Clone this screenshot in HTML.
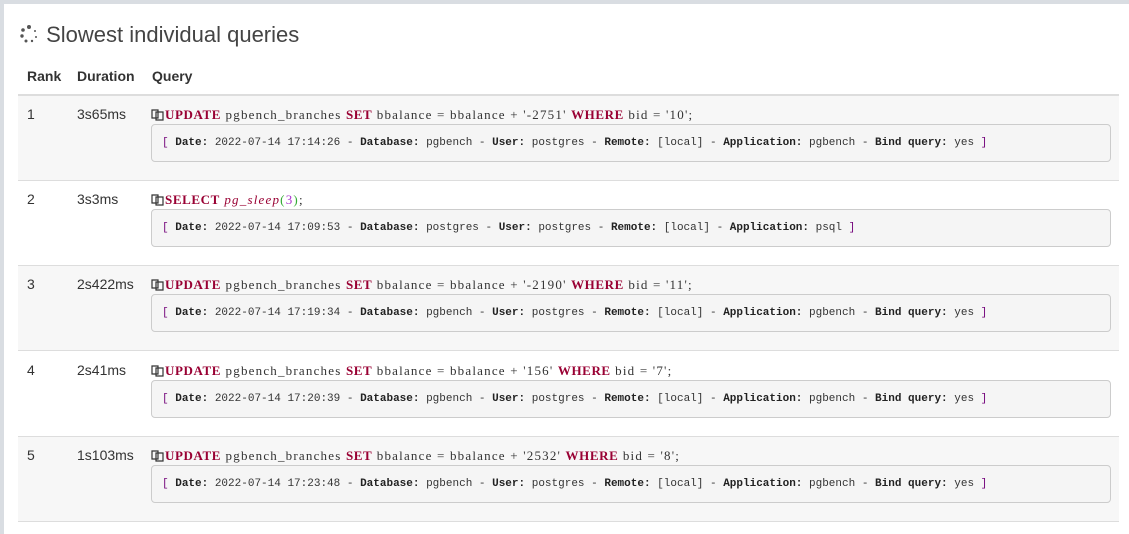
<!DOCTYPE html>
<html><head><meta charset="utf-8"><style>
body{margin:0;width:1129px;height:528px;background:#d9dde2;overflow:hidden;font-family:"Liberation Sans",sans-serif;}
.panel{position:absolute;left:4px;top:4px;width:1125px;height:530px;background:#fff;}
h2{position:absolute;left:18px;top:22px;margin:0;font-weight:normal;font-size:22px;color:#444;}
.hd{position:absolute;top:68px;font-weight:bold;font-size:14px;color:#333;}
.line{position:absolute;left:18px;width:1101px;height:2px;background:#ddd;top:94px;}
.row{position:absolute;left:18px;width:1101px;height:84px;border-bottom:1px solid #ddd;font-size:14px;color:#333;}
.g{background:#f7f7f7;}
.rk{position:absolute;left:9px;top:10px;}
.du{position:absolute;left:59px;top:10px;}
.q{position:absolute;left:133px;top:11px;font-family:"Liberation Serif",serif;font-size:13px;letter-spacing:1.2px;color:#333;white-space:nowrap;}
.k{color:#990033;font-weight:bold;letter-spacing:0.6px}
.f{color:#990033;font-style:italic;}
.n{color:#a3c;}
.box{position:absolute;left:133px;top:28px;width:960px;height:38px;background:#f5f5f5;border:1px solid #ccc;border-radius:4px;font-family:"Liberation Mono",monospace;font-size:11px;line-height:37px;color:#333;white-space:nowrap;box-sizing:border-box;padding-left:10px;}
.box b{color:#222}
.br{color:#74057b}
.ic{display:inline-block;width:13px;height:13px;vertical-align:-2px;margin-right:1px}
</style></head><body>
<div class="panel"></div>
<h2><svg width="22" height="20" viewBox="0 0 22 20" style="vertical-align:-2px"><g fill="#555"><circle cx="11" cy="3" r="2"/><circle cx="5" cy="6" r="1.8"/><circle cx="4" cy="12" r="1.7"/><circle cx="8" cy="17" r="1.5"/><circle cx="14" cy="17" r="1.2"/><circle cx="18" cy="13" r="1"/><circle cx="17" cy="7" r="1"/></g></svg> Slowest individual queries</h2>
<div class="hd" style="left:27px">Rank</div>
<div class="hd" style="left:77px">Duration</div>
<div class="hd" style="left:152px">Query</div>
<div class="line"></div>

<svg width="0" height="0" style="position:absolute"><defs><symbol id="cp" viewBox="0 0 13 13"><path d="M1 2h6v8H1z M5 4h7v8H5z" fill="none" stroke="#333" stroke-width="1.2"/></symbol></defs></svg>

<div class="row g" style="top:96px"><div class="rk">1</div><div class="du">3s65ms</div>
<div class="q"><svg class="ic"><use href="#cp"/></svg><span class="k">UPDATE</span> pgbench_branches <span class="k">SET</span> bbalance = bbalance + '-2751' <span class="k">WHERE</span> bid = '10';</div>
<div class="box"><span class="br">[</span> <b>Date:</b> 2022-07-14 17:14:26 - <b>Database:</b> pgbench - <b>User:</b> postgres - <b>Remote:</b> [local] - <b>Application:</b> pgbench - <b>Bind query:</b> yes <span class="br">]</span></div></div>

<div class="row" style="top:181px"><div class="rk">2</div><div class="du">3s3ms</div>
<div class="q"><svg class="ic"><use href="#cp"/></svg><span class="k">SELECT</span> <span class="f">pg_sleep</span><span style="color:#3a3">(</span><span class="n">3</span><span style="color:#3a3">)</span>;</div>
<div class="box"><span class="br">[</span> <b>Date:</b> 2022-07-14 17:09:53 - <b>Database:</b> postgres - <b>User:</b> postgres - <b>Remote:</b> [local] - <b>Application:</b> psql <span class="br">]</span></div></div>

<div class="row g" style="top:266px"><div class="rk">3</div><div class="du">2s422ms</div>
<div class="q"><svg class="ic"><use href="#cp"/></svg><span class="k">UPDATE</span> pgbench_branches <span class="k">SET</span> bbalance = bbalance + '-2190' <span class="k">WHERE</span> bid = '11';</div>
<div class="box"><span class="br">[</span> <b>Date:</b> 2022-07-14 17:19:34 - <b>Database:</b> pgbench - <b>User:</b> postgres - <b>Remote:</b> [local] - <b>Application:</b> pgbench - <b>Bind query:</b> yes <span class="br">]</span></div></div>

<div class="row" style="top:352px"><div class="rk">4</div><div class="du">2s41ms</div>
<div class="q"><svg class="ic"><use href="#cp"/></svg><span class="k">UPDATE</span> pgbench_branches <span class="k">SET</span> bbalance = bbalance + '156' <span class="k">WHERE</span> bid = '7';</div>
<div class="box"><span class="br">[</span> <b>Date:</b> 2022-07-14 17:20:39 - <b>Database:</b> pgbench - <b>User:</b> postgres - <b>Remote:</b> [local] - <b>Application:</b> pgbench - <b>Bind query:</b> yes <span class="br">]</span></div></div>

<div class="row g" style="top:437px"><div class="rk">5</div><div class="du">1s103ms</div>
<div class="q"><svg class="ic"><use href="#cp"/></svg><span class="k">UPDATE</span> pgbench_branches <span class="k">SET</span> bbalance = bbalance + '2532' <span class="k">WHERE</span> bid = '8';</div>
<div class="box"><span class="br">[</span> <b>Date:</b> 2022-07-14 17:23:48 - <b>Database:</b> pgbench - <b>User:</b> postgres - <b>Remote:</b> [local] - <b>Application:</b> pgbench - <b>Bind query:</b> yes <span class="br">]</span></div></div>
</body></html>
